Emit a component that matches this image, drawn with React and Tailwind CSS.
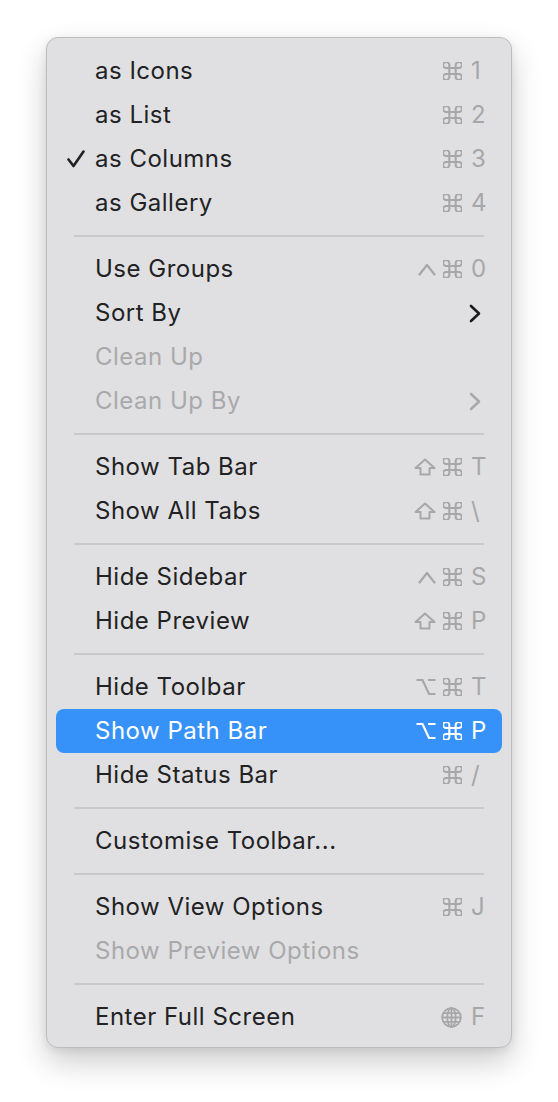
import React from "react";

const SC = { stroke: "currentColor", fill: "none", strokeLinecap: "round", strokeLinejoin: "round" };

function Cmd() {
  return (
    <svg width="19" height="18" viewBox="3 3 18 18" preserveAspectRatio="none" {...SC} strokeWidth="2">
      <path d="M15 6v12a3 3 0 1 0 3-3H6a3 3 0 1 0 3 3V6a3 3 0 1 0-3 3h12a3 3 0 1 0-3-3" />
    </svg>
  );
}
function Shift() {
  return (
    <svg width="22" height="18" viewBox="0 0 22 18" {...SC} strokeWidth="2">
      <path d="M11 1.5 L20.5 10 H15.5 V16.5 H6.5 V10 H1.5 Z" />
    </svg>
  );
}
function Ctrl() {
  return (
    <svg width="18" height="13" viewBox="0 0 18 13" {...SC} strokeWidth="2.2">
      <path d="M1.5 11.5 L9 2 L16.5 11.5" />
    </svg>
  );
}
function Opt() {
  return (
    <svg width="20" height="18" viewBox="0 0 20 18" {...SC} strokeWidth="2.2" strokeLinecap="butt" strokeLinejoin="miter">
      <path d="M0.5 2 H6.5 L13 16 H19.5 M12 2 H19.5" />
    </svg>
  );
}
function Globe() {
  return (
    <svg width="21" height="21" viewBox="0 0 21 21" {...SC} strokeWidth="1.8">
      <circle cx="10.5" cy="10.5" r="9.3" />
      <ellipse cx="10.5" cy="10.5" rx="4.2" ry="9.3" />
      <path d="M10.5 1.2 V19.8 M1.2 10.5 H19.8 M2.6 6.2 H18.4 M2.6 14.8 H18.4" />
    </svg>
  );
}
function Check() {
  return (
    <svg width="18" height="18" viewBox="0 0 18 18" {...SC} strokeWidth="2.6">
      <path d="M1.5 9.5 L6.5 16 L16.5 1.5" />
    </svg>
  );
}
function Chevron() {
  return (
    <svg width="12" height="19" viewBox="0 0 12 19" {...SC} strokeWidth="2.6">
      <path d="M2 2 L10 9.5 L2 17" />
    </svg>
  );
}

const MOD = { cmd: Cmd, shift: Shift, ctrl: Ctrl, opt: Opt, globe: Globe };

const items = [
  { label: "as Icons", mods: ["cmd"], key: "1" },
  { label: "as List", mods: ["cmd"], key: "2" },
  { label: "as Columns", mods: ["cmd"], key: "3", checked: true },
  { label: "as Gallery", mods: ["cmd"], key: "4" },
  "sep",
  { label: "Use Groups", mods: ["ctrl", "cmd"], key: "0" },
  { label: "Sort By", sub: true },
  { label: "Clean Up", disabled: true },
  { label: "Clean Up By", sub: true, disabled: true },
  "sep",
  { label: "Show Tab Bar", mods: ["shift", "cmd"], key: "T" },
  { label: "Show All Tabs", mods: ["shift", "cmd"], key: "\\" },
  "sep",
  { label: "Hide Sidebar", mods: ["ctrl", "cmd"], key: "S" },
  { label: "Hide Preview", mods: ["shift", "cmd"], key: "P" },
  "sep",
  { label: "Hide Toolbar", mods: ["opt", "cmd"], key: "T" },
  { label: "Show Path Bar", mods: ["opt", "cmd"], key: "P", active: true },
  { label: "Hide Status Bar", mods: ["cmd"], key: "/" },
  "sep",
  { label: "Customise Toolbar..." },
  "sep",
  { label: "Show View Options", mods: ["cmd"], key: "J" },
  { label: "Show Preview Options", disabled: true },
  "sep",
  { label: "Enter Full Screen", mods: ["globe"], key: "F" },
];

function Row({ it }) {
  const textColor = it.active ? "text-white" : it.disabled ? "text-[#a9a9ab]" : "text-[#222224]";
  const scColor = it.active ? "text-white" : "text-[#a7a7a9]";
  return (
    <div className={`h-[44px] flex items-center rounded-[8px] pl-[11px] pr-[16px] ${it.active ? "bg-[#3692f9]" : ""} ${textColor}`}>
      <div className="w-[28px] flex items-center">{it.checked ? <Check /> : null}</div>
      <span className="whitespace-nowrap tracking-[0.5px]">{it.label}</span>
      <div className="ml-auto flex items-center">
        {it.mods && (
          <div className={`flex items-center gap-[7px] ${scColor}`}>
            {it.mods.map((m, i) => {
              const C = MOD[m];
              return <C key={i} />;
            })}
          </div>
        )}
        {it.key && <span className={`w-[15px] ml-[9px] text-left ${scColor}`}>{it.key}</span>}
        {it.sub && (
          <div className={`mr-[5px] ${it.disabled ? "text-[#a9a9ab]" : "text-[#1c1c1e]"}`}>
            <Chevron />
          </div>
        )}
      </div>
    </div>
  );
}

export default function App() {
  return (
    <div
      className="min-h-screen bg-white pt-[37px] pl-[46px]"
      style={{ fontFamily: "Inter, 'Noto Sans', sans-serif" }}
    >
      <div className="w-[466px] rounded-[12px] bg-[#e0e0e2] border border-[#bdbdbf] px-[9px] pt-[11px] pb-[8px] shadow-[0_14px_30px_rgba(0,0,0,0.2),0_2px_8px_rgba(0,0,0,0.08)] text-[24px] leading-none">
        {items.map((it, i) =>
          it === "sep" ? (
            <div key={i} className="h-[22px] flex items-center px-[18px]">
              <div className="h-[2px] w-full bg-[#c9c9cb]" />
            </div>
          ) : (
            <Row key={i} it={it} />
          )
        )}
      </div>
    </div>
  );
}
